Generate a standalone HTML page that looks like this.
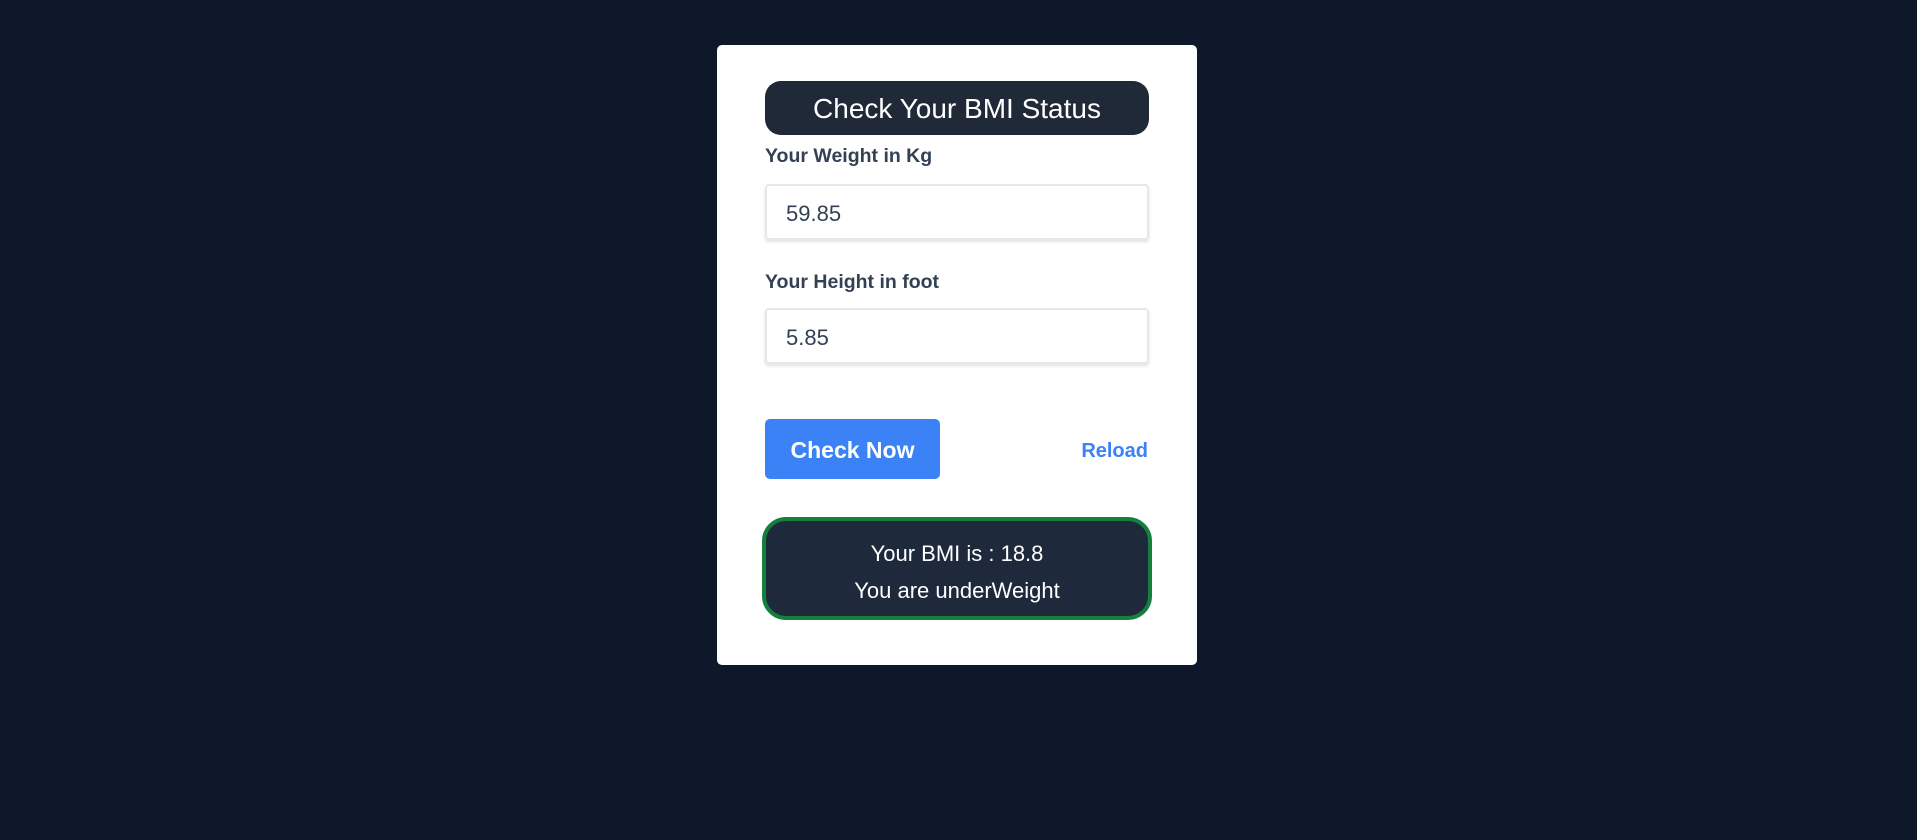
<!DOCTYPE html>
<html><head><meta charset="utf-8"><style>
*{box-sizing:border-box;margin:0;padding:0}
html,body{width:1917px;height:840px;background:#0f172a;font-family:"Liberation Sans",sans-serif;overflow:hidden}
.card{position:absolute;left:717px;top:45px;width:480px;height:620px;background:#fff;border-radius:5px}
.title{position:absolute;left:48px;top:36px;width:384px;height:54px;background:#1f2937;border-radius:16px;color:#fff;font-size:28px;text-align:center;line-height:56px}
.lbl{position:absolute;left:48px;font-weight:bold;font-size:19.5px;color:#334155}
.inp{position:absolute;left:48px;width:384px;height:56px;border:2px solid #e5e7eb;border-radius:4px;box-shadow:0 2px 3px rgba(0,0,0,0.12);font-size:22px;color:#334155;padding-left:19px;line-height:56px}
.btn{position:absolute;left:48px;top:374px;width:175px;height:60px;background:#3b82f6;border-radius:5px;color:#fff;font-weight:bold;font-size:23px;text-align:center;line-height:62px}
.rel{position:absolute;right:49px;top:394px;color:#3b82f6;font-weight:bold;font-size:20px;line-height:24px}
.res{position:absolute;left:45px;top:472px;width:390px;height:103px;background:#1e293b;border:4px solid #15803d;border-radius:24px;color:#fff;font-size:22px;text-align:center;padding-top:14px;line-height:37px}
</style></head><body>
<div class="card">
<div class="title">Check Your BMI Status</div>
<div class="lbl" style="top:100px">Your Weight in Kg</div>
<div class="inp" style="top:139px">59.85</div>
<div class="lbl" style="top:226px">Your Height in foot</div>
<div class="inp" style="top:263px">5.85</div>
<div class="btn">Check Now</div>
<div class="rel">Reload</div>
<div class="res">Your BMI is : 18.8<br>You are underWeight</div>
</div>
</body></html>
